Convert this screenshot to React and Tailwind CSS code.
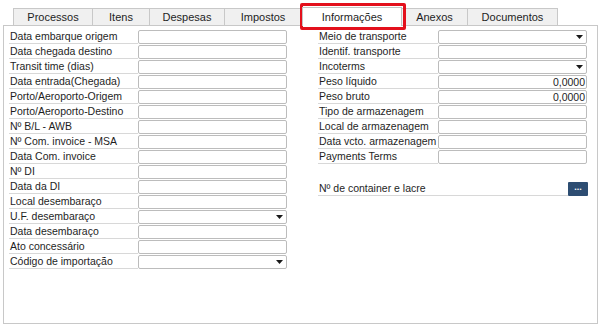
import React from 'react';

const leftRows = [
  { label: 'Data embarque origem' },
  { label: 'Data chegada destino' },
  { label: 'Transit time (dias)' },
  { label: 'Data entrada(Chegada)' },
  { label: 'Porto/Aeroporto-Origem' },
  { label: 'Porto/Aeroporto-Destino' },
  { label: 'Nº B/L - AWB' },
  { label: 'Nº Com. invoice - MSA' },
  { label: 'Data Com. invoice' },
  { label: 'Nº DI' },
  { label: 'Data da DI' },
  { label: 'Local desembaraço' },
  { label: 'U.F. desembaraço', select: true },
  { label: 'Data desembaraço' },
  { label: 'Ato concessário' },
  { label: 'Código de importação', select: true },
];

const rightRows = [
  { label: 'Meio de transporte', select: true },
  { label: 'Identif. transporte' },
  { label: 'Incoterms', select: true },
  { label: 'Peso líquido', value: '0,0000' },
  { label: 'Peso bruto', value: '0,0000' },
  { label: 'Tipo de armazenagem' },
  { label: 'Local de armazenagem' },
  { label: 'Data vcto. armazenagem' },
  { label: 'Payments Terms' },
];

const tabs = [
  { name: 'Processos', w: 'w-[80px]' },
  { name: 'Itens', w: 'w-[57px]' },
  { name: 'Despesas', w: 'w-[75px]' },
  { name: 'Impostos', w: 'w-[77px]' },
  { name: 'Informações', w: 'w-[100px]', active: true },
  { name: 'Anexos', w: 'w-[66px]' },
  { name: 'Documentos', w: 'w-[90px]' },
];

function Arrow() {
  return (
    <svg width="7" height="4" viewBox="0 0 7 4" className="mr-[3px]">
      <path d="M0 0H7L3.5 4Z" fill="#1a1a1a" />
    </svg>
  );
}

function Row({ label, select, value, labelW }) {
  return (
    <div className="flex h-[15px] items-start">
      <div className={`${labelW} h-[14px] flex items-center border-b border-[#d8d8d8] pl-[1px] text-[#1e1e1e] whitespace-nowrap`}>
        {label}
      </div>
      <div className="w-[149px] h-[14px] border border-[#bcbcbc] rounded-[2px] bg-white flex items-center justify-end">
        {select && <Arrow />}
        {value && <span className="pr-[1px] text-[#1e1e1e]">{value}</span>}
      </div>
    </div>
  );
}

export default function App() {
  return (
    <div className="w-[604px] h-[328px] bg-white relative pt-[6px] pl-[3px] font-['Liberation_Sans',Arial,sans-serif] text-[10.5px] leading-none">
      {/* abas */}
      <div className="flex items-end h-[19px] pl-[10px]">
        {tabs.map((t) =>
          t.active ? (
            <div
              key={t.name}
              className={`${t.w} h-[19px] -mb-px relative z-10 bg-white border border-b-0 border-[#c4c4c4] flex items-center justify-center text-[#1e1e1e] text-[11px]`}
            >
              {t.name}
            </div>
          ) : (
            <div
              key={t.name}
              className={`${t.w} h-[17px] bg-[#f0f0f0] border border-b-0 border-l-0 first:border-l border-[#c8c8c8] flex items-center justify-center text-[#1e1e1e] text-[11px]`}
            >
              {t.name}
            </div>
          )
        )}
      </div>

      {/* painel */}
      <div className="w-[595px] h-[299px] border border-[#c8c8c8] pt-[4px] pl-[5px] flex gap-[31px]">
        <div className="flex flex-col">
          {leftRows.map((r) => (
            <Row key={r.label} labelW="w-[129px]" {...r} />
          ))}
        </div>
        <div className="flex flex-col">
          {rightRows.map((r) => (
            <Row key={r.label} labelW="w-[120px]" {...r} />
          ))}
          <div className="h-[15px]" />
          <div className="flex h-[15px] items-start mt-[2px]">
            <div className="w-[250px] h-[14px] flex items-center border-b border-[#d8d8d8] pl-[1px] text-[#1e1e1e]">
              Nº de container e lacre
            </div>
            <div className="w-[20px] h-[14px] bg-[#2d4d72] rounded-[1px] flex items-center justify-center text-white text-[9px] font-bold leading-none pb-[3px]">
              ...
            </div>
          </div>
        </div>
      </div>

      {/* destaque vermelho */}
      <div className="absolute left-[300px] top-[3px] w-[106px] h-[27px] border-[3px] border-[#e3101c] rounded-[2px] pointer-events-none" />
    </div>
  );
}
